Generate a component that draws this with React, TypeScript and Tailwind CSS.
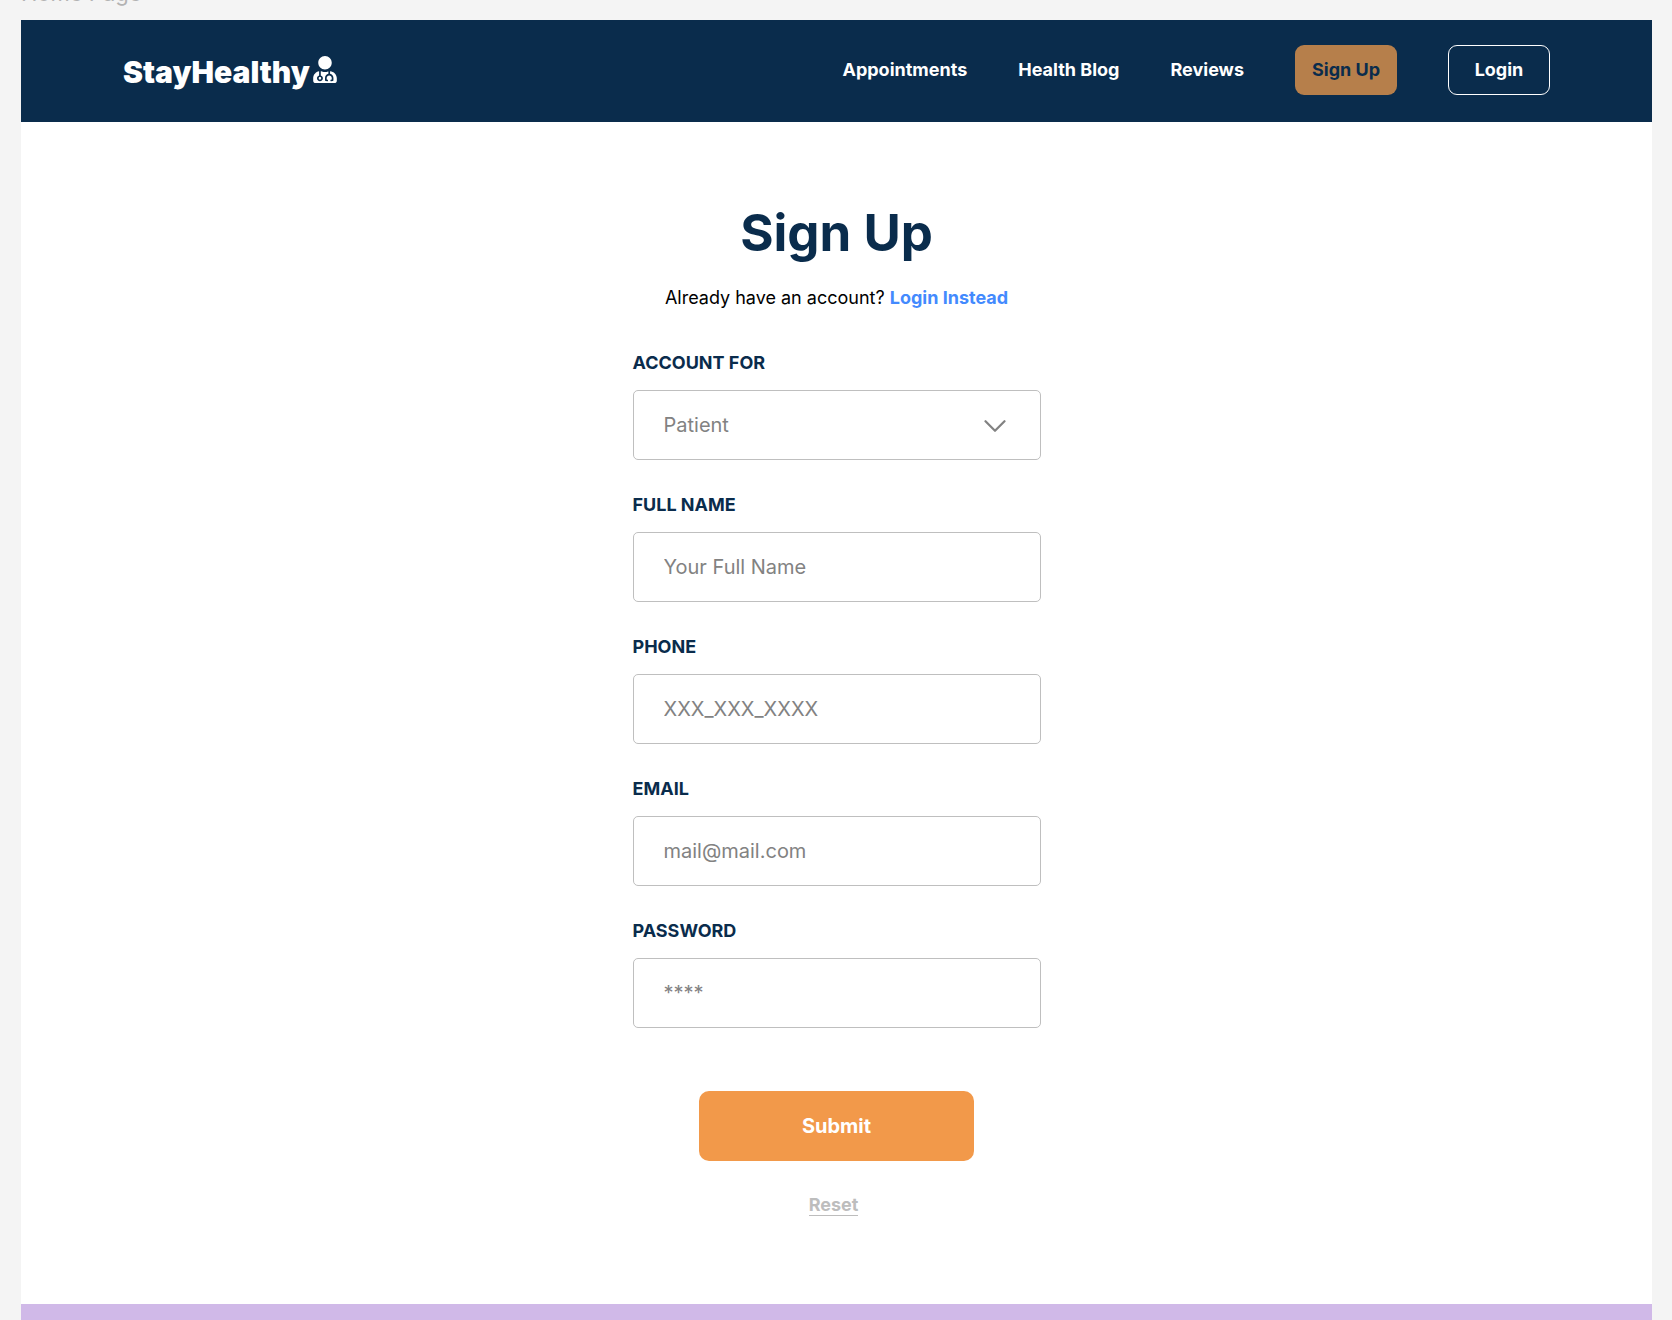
import React from "react";
import { FaUserMd } from "react-icons/fa";

const inputClass =
  "h-[70px] w-full rounded-[5px] border border-[#bfbfbf] bg-white px-[30px] text-xl text-[#828282] placeholder:text-[#828282] placeholder:opacity-100 outline-none focus:border-[#0a2c4c]";
const labelClass = "mb-[15px] block text-lg font-bold leading-6 text-[#0a2c4c] uppercase";

const fields = [
  { id: "name", label: "Full Name", type: "text", placeholder: "Your Full Name" },
  { id: "phone", label: "Phone", type: "tel", placeholder: "XXX_XXX_XXXX" },
  { id: "email", label: "Email", type: "email", placeholder: "mail@mail.com" },
  { id: "password", label: "Password", type: "password", placeholder: "****" },
];

function Header() {
  return (
    <header className="flex h-[102px] items-center justify-between bg-[#0a2c4c] px-[102px] text-white">
      <a href="#" className="flex items-center gap-[3px]">
        <span className="pt-0.5 text-[30px] font-black leading-10">StayHealthy</span>
        <FaUserMd className="mb-1 h-[27px] w-6" aria-hidden="true" />
      </a>
      <nav className="flex items-center gap-[51px] pb-0.5 text-lg font-bold">
        <a href="#">Appointments</a>
        <a href="#">Health Blog</a>
        <a href="#">Reviews</a>
        <button type="button" className="h-[50px] w-[102px] rounded-[9px] bg-[#b67f4b] text-[#0a2c4c]">
          Sign Up
        </button>
        <button type="button" className="h-[50px] w-[102px] rounded-[9px] border border-white">
          Login
        </button>
      </nav>
    </header>
  );
}

function SignUpForm() {
  return (
    <form className="flex w-full max-w-[408px] flex-col items-center">
      <div className="mb-[33px] w-full">
        <label htmlFor="account" className={labelClass}>
          Account for
        </label>
        <div className="relative">
          <select id="account" defaultValue="patient" className={inputClass + " appearance-none"}>
            <option value="patient">Patient</option>
            <option value="doctor">Doctor</option>
          </select>
          <svg
            className="pointer-events-none absolute top-[30px] right-[35px] h-3 w-[22px]"
            viewBox="0 0 22 12"
            fill="none"
            stroke="#828282"
            strokeWidth="2.2"
            strokeLinecap="round"
            strokeLinejoin="round"
            aria-hidden="true"
          >
            <path d="M1.500 1.200 11 10.800l9.500-9.600" />
          </svg>
        </div>
      </div>
      {fields.map((f) => (
        <div key={f.id} className="mb-[33px] w-full">
          <label htmlFor={f.id} className={labelClass}>
            {f.label}
          </label>
          <input id={f.id} type={f.type} placeholder={f.placeholder} className={inputClass} />
        </div>
      ))}
      <button
        type="submit"
        className="mt-[30px] h-[70px] w-[275px] rounded-[10px] bg-[#f2994a] text-xl font-bold text-white"
      >
        Submit
      </button>
      <button
        type="reset"
        className="mt-[34px] mr-1.5 border-b border-[#bdbdbd] text-lg leading-5 font-bold text-[#bdbdbd]"
      >
        Reset
      </button>
    </form>
  );
}

export default function App() {
  return (
    <div className="min-h-screen overflow-hidden bg-[#f4f4f4] pr-5 pl-[21px] font-['Inter',sans-serif]">
      <div className="flex h-5 items-end overflow-hidden">
        <p className="mb-[15px] text-[22px] leading-6 text-[#b3b3b3]">Home Page</p>
      </div>
      <div className="bg-white">
        <Header />
        <main className="flex flex-col items-center px-6 pt-20 pb-[88px]">
          <h1 className="text-[51px] leading-[62px] font-bold text-[#0a2c4c]">Sign Up</h1>
          <p className="mt-[22px] mb-[41px] text-lg leading-6 text-black">
            Already have an account?{" "}
            <a href="#" className="font-bold text-[#438afe]">
              Login Instead
            </a>
          </p>
          <SignUpForm />
        </main>
        <footer className="h-4 bg-[#d0b9e8]" />
      </div>
    </div>
  );
}
